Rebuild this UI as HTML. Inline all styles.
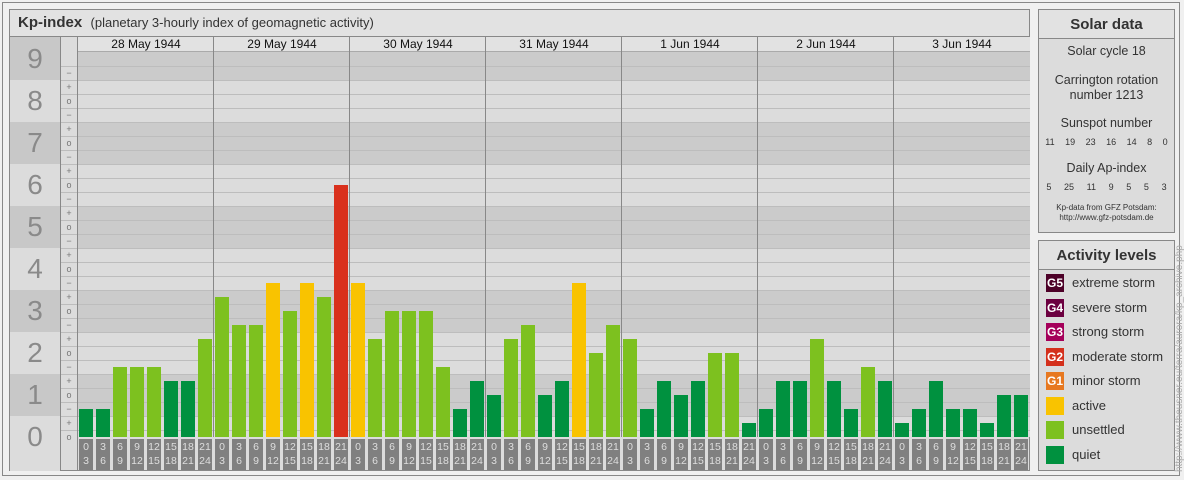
<!DOCTYPE html>
<html><head><meta charset="utf-8"><style>
body{margin:0;width:1184px;height:480px;background:#f0f0f0;font-family:"Liberation Sans",sans-serif;position:relative;overflow:hidden}
.a{position:absolute}
#outer{left:2px;top:2px;width:1178px;height:474px;border:1px solid #888;box-sizing:border-box}
.panel{background:#dcdcdc;border:1px solid #888;box-sizing:border-box}
.ptitle{border-bottom:1px solid #888;background:#e2e2e2;box-sizing:border-box}
.c{text-align:center;color:#333}
</style></head><body>
<div class="a" id="outer"></div>
<div class="a panel" style="left:9px;top:9px;width:1021px;height:462px"></div>
<div class="a ptitle" style="left:9px;top:9px;width:1021px;height:28px;border:1px solid #888"></div>
<div class="a" style="left:18px;top:14px;font-size:15px;color:#333"><b>Kp-index</b>&nbsp; <span style="font-size:13px">(planetary 3-hourly index of geomagnetic activity)</span></div>
<div id="chart"></div>
<div class="a panel" style="left:1038px;top:9px;width:137px;height:224px"></div>
<div class="a ptitle c" style="left:1038px;top:9px;width:137px;height:30px;border:1px solid #888;font-size:15px;font-weight:bold;line-height:29px">Solar data</div>
<div class="a c" style="left:1038px;top:44px;width:137px;font-size:12.5px">Solar cycle 18</div>
<div class="a c" style="left:1038px;top:73px;width:137px;font-size:12.5px;line-height:15px">Carrington rotation<br>number 1213</div>
<div class="a c" style="left:1038px;top:116px;width:137px;font-size:12.5px">Sunspot number</div>
<div class="a c" style="left:1040px;top:137px;width:133px;font-size:9px;display:flex;justify-content:space-around"><span>11</span><span>19</span><span>23</span><span>16</span><span>14</span><span>8</span><span>0</span></div>
<div class="a c" style="left:1038px;top:161px;width:137px;font-size:12.5px">Daily Ap-index</div>
<div class="a c" style="left:1040px;top:182px;width:133px;font-size:9px;display:flex;justify-content:space-around"><span>5</span><span>25</span><span>11</span><span>9</span><span>5</span><span>5</span><span>3</span></div>
<div class="a c" style="left:1038px;top:203px;width:137px;font-size:8px;line-height:10px">Kp-data from GFZ Potsdam:<br>http://www.gfz-potsdam.de</div>
<div class="a panel" style="left:1038px;top:240px;width:137px;height:231px"></div>
<div class="a ptitle c" style="left:1038px;top:240px;width:137px;height:30px;border:1px solid #888;font-size:15px;font-weight:bold;line-height:29px">Activity levels</div>
<div id="leg"></div>
<div class="a" style="left:1174px;top:472px;transform:rotate(-90deg);transform-origin:0 0;font-size:10px;color:#aaa;white-space:nowrap">http://www.theusner.eu/terra/aurora/kp_archive.php</div>
<script>
var h='';
function box(x,y,w,hh,bg,extra){h+='<div class="a" style="left:'+x+'px;top:'+y+'px;width:'+w+'px;height:'+hh+'px;background:'+bg+';'+(extra||'')+'"></div>';}
function Y(v){return 437-14*v;}
for(var n=0;n<=9;n++){
 var t=Math.max(Y(3*n+1.5),51),b=Math.min(Y(3*n-1.5),437);
 var dark=n%2==1;
 box(78,t,952,b-t,dark?'#cbcbcb':'#dcdcdc');
 var lt=n==9?37:t;var lb=n==0?471:b;
 box(10,lt,50,lb-lt,dark?'#c8c8c8':'#dcdcdc');
 h+='<div class="a" style="left:10px;top:'+(Y(3*n)-16)+'px;width:50px;text-align:center;font-size:28px;color:#8a8a8a">'+n+'</div>';
}
box(60,37,1,434,'#888');box(77,37,1,434,'#888');
box(78,37,952,14,'#e2e2e2');box(61,37,16,14,'#dcdcdc');
for(var k=0;k<27;k++){var yy=Math.round(Y(k+0.5));box(78,yy,952,1,'#bdbdbd');box(61,yy,16,1,'#bdbdbd');
 var v=k;var sym=v%3==0?'o':(v%3==1?'+':'\u2212');
 h+='<div class="a" style="left:61px;top:'+(Y(k)-7)+'px;width:16px;text-align:center;font-size:9px;color:#777;line-height:14px">'+sym+'</div>';}
box(78,51,952,1,'#aaa');
var days=['28 May 1944','29 May 1944','30 May 1944','31 May 1944','1 Jun 1944','2 Jun 1944','3 Jun 1944'];
var vals=[[2,2,5,5,5,4,4,7],[10,8,8,11,9,11,10,18],[11,7,9,9,9,5,2,4],[3,7,8,3,4,11,6,8],[7,2,4,3,4,6,6,1],[2,4,4,7,4,2,5,4],[1,2,4,2,2,1,3,3]];
for(var d=0;d<7;d++){var x0=78+136*d;
 if(d>0)box(x0-1,37,1,400,'#888');
 h+='<div class="a" style="left:'+x0+'px;top:38px;width:136px;text-align:center;font-size:12px;color:#111;line-height:13px">'+days[d]+'</div>';
 for(var i=0;i<8;i++){var v=vals[d][i];var c=v<=4?'#00913f':v<=10?'#7dc11f':v<=14?'#f9c300':'#d9301c';
  var bx=x0+1+17*i;box(bx,Y(v),14,14*v,c);
  box(bx,439,14,31,'#808080');
  h+='<div class="a" style="left:'+bx+'px;top:440px;width:14px;text-align:center;font-size:10.5px;color:#dedede;line-height:14px">'+(3*i)+'<br>'+(3*i+3)+'</div>';}
}
document.getElementById('chart').innerHTML=h;
var L=[['G5','#4d0128','extreme storm'],['G4','#6c0040','severe storm'],['G3','#a5005a','strong storm'],['G2','#d4301c','moderate storm'],['G1','#e77820','minor storm'],['','#f9c300','active'],['','#7dc11f','unsettled'],['','#00913f','quiet']];
var g='';for(var i=0;i<8;i++){var yy=274+24.5*i;
 g+='<div class="a" style="left:1046px;top:'+yy+'px;width:18px;height:18px;background:'+L[i][1]+';color:#fff;font-size:12px;font-weight:bold;line-height:18px;text-align:center">'+L[i][0]+'</div>';
 g+='<div class="a" style="left:1072px;top:'+(yy+1)+'px;font-size:13px;color:#333">'+L[i][2]+'</div>';}
document.getElementById('leg').innerHTML=g;
</script>
</body></html>
